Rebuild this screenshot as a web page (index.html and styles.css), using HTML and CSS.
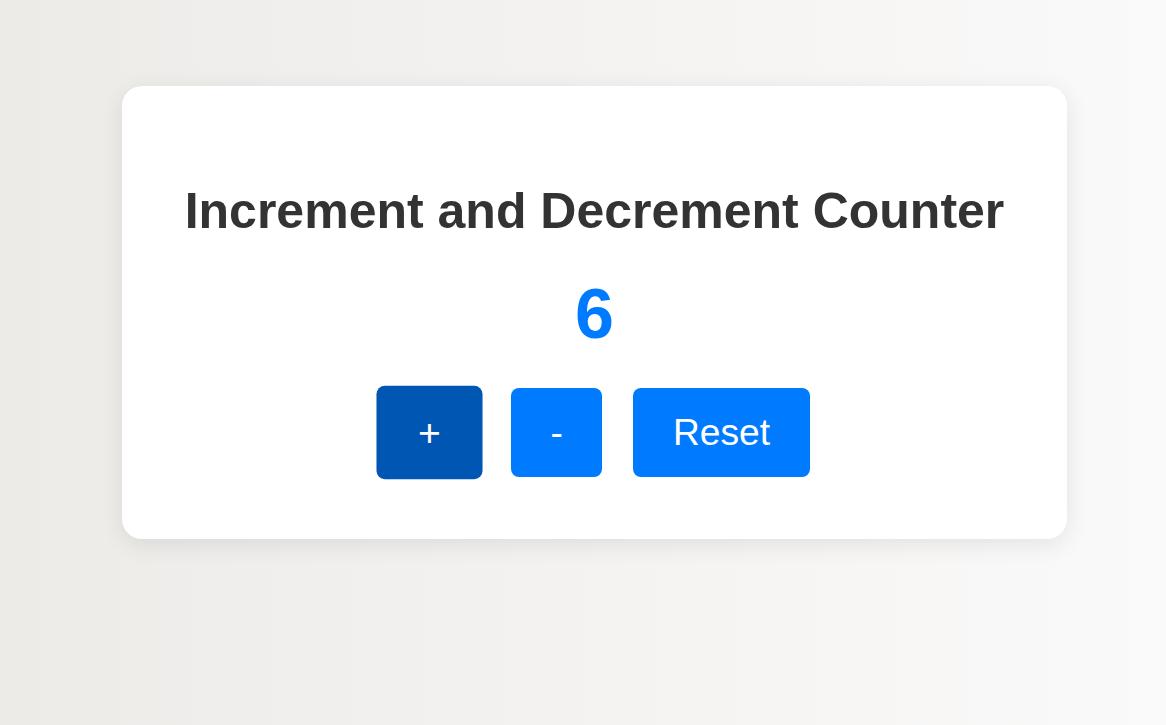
FILE: index.html
```html
<!DOCTYPE html>
<html lang="en">
<head>
<meta charset="utf-8">
<title>Increment and Decrement Counter</title>
<link rel="stylesheet" href="styles.css">
</head>
<body>
<div class="card">
  <h1 class="title">Increment and Decrement Counter</h1>
  <div class="count">6</div>
  <div class="buttons">
    <button class="btn btn-active">+</button>
    <button class="btn">-</button>
    <button class="btn">Reset</button>
  </div>
</div>
</body>
</html>
```
FILE: styles.css
```css
html, body {
  margin: 0;
  height: 100%;
}
body {
  background: linear-gradient(to right, #ecebe8, #fbfafa);
  font-family: "Liberation Sans", Arial, sans-serif;
  padding: 86px 0 0 122px;
  box-sizing: border-box;
}
.card {
  width: 945px;
  box-sizing: border-box;
  background: #ffffff;
  border-radius: 20px;
  box-shadow: 0 5px 25px rgba(0, 0, 0, 0.09);
  padding: 62px 20px;
  text-align: center;
}
.title {
  margin: 34px 0 0;
  font-size: 50px;
  font-weight: bold;
  color: #333333;
}
.count {
  font-size: 70px;
  font-weight: bold;
  color: #007bff;
  margin: 34px 0 34px;
  line-height: 80px;
}
.buttons {
  display: flex;
  justify-content: center;
  gap: 31px;
}
.btn {
  font-family: "Liberation Sans", Arial, sans-serif;
  font-size: 37.2px;
  color: #ffffff;
  background: #007bff;
  border: none;
  border-radius: 8px;
  padding: 23px 39.5px;
  line-height: normal;
  cursor: pointer;
}
.btn-active {
  background: #0056b3;
  transform: scale(1.05);
}
```
